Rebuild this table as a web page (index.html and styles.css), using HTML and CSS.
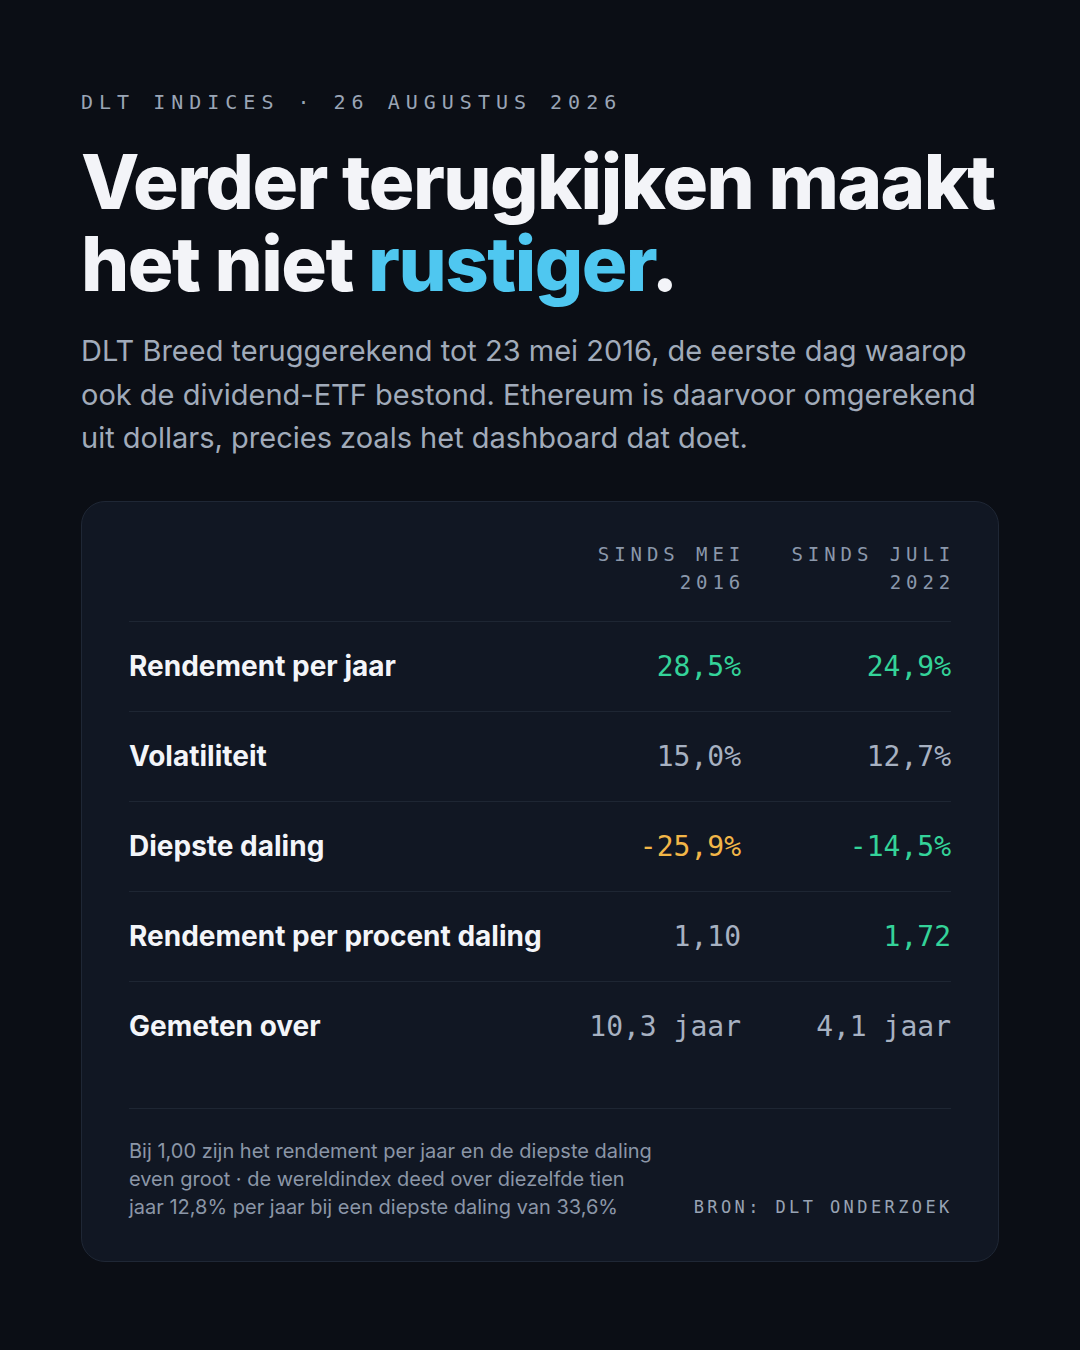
FILE: index.html
```html
<!DOCTYPE html>
<html lang="nl">
<head>
<meta charset="utf-8">
<title>DLT Indices</title>
<link rel="stylesheet" href="styles.css">
</head>
<body>
<main class="page">
  <div class="eyebrow">DLT INDICES · 26 AUGUSTUS 2026</div>
  <h1 class="title">Verder terugkijken maakt<br>het niet <span class="accent">rustiger</span>.</h1>
  <p class="lead">DLT Breed teruggerekend tot 23 mei 2016, de eerste dag waarop ook de dividend-ETF bestond. Ethereum is daarvoor omgerekend uit dollars, precies zoals het dashboard dat doet.</p>

  <section class="card">
    <div class="row head">
      <div></div>
      <div class="colhead">SINDS MEI<br>2016</div>
      <div class="colhead">SINDS JULI<br>2022</div>
    </div>
    <div class="row">
      <div class="label">Rendement per jaar</div>
      <div class="val green">28,5%</div>
      <div class="val green">24,9%</div>
    </div>
    <div class="row">
      <div class="label">Volatiliteit</div>
      <div class="val">15,0%</div>
      <div class="val">12,7%</div>
    </div>
    <div class="row">
      <div class="label">Diepste daling</div>
      <div class="val amber">-25,9%</div>
      <div class="val green">-14,5%</div>
    </div>
    <div class="row">
      <div class="label">Rendement per procent daling</div>
      <div class="val">1,10</div>
      <div class="val green">1,72</div>
    </div>
    <div class="row">
      <div class="label">Gemeten over</div>
      <div class="val">10,3 jaar</div>
      <div class="val">4,1 jaar</div>
    </div>
    <footer class="foot">
      <p class="note">Bij 1,00 zijn het rendement per jaar en de diepste daling even groot · de wereldindex deed over diezelfde tien jaar 12,8% per jaar bij een diepste daling van 33,6%</p>
      <div class="source">BRON: DLT ONDERZOEK</div>
    </footer>
  </section>
</main>
</body>
</html>
```

FILE: styles.css
```css
* { box-sizing: border-box; }
html, body { margin: 0; padding: 0; }
body {
  background: #0b0e15;
  width: 1080px;
  height: 1350px;
  overflow: hidden;
  font-family: Inter, "Noto Sans", sans-serif;
}
.page {
  padding: 89px 81px 0 81px;
}
.eyebrow {
  font-family: "DejaVu Sans Mono", monospace;
  font-size: 20px;
  line-height: 26px;
  letter-spacing: 0.3em;
  color: #9aa5b5;
}
.title {
  margin: 25px 0 0 0;
  font-family: Inter, sans-serif;
  font-weight: 800;
  font-size: 76px;
  line-height: 82px;
  letter-spacing: -0.02em;
  color: #f3f4f8;
}
.accent { color: #4fc7f0; }
.lead {
  margin: 25px 0 0 0;
  font-size: 29px;
  line-height: 43.5px;
  color: #a1abba;
  max-width: 918px;
}
.card {
  margin-top: 41px;
  background: #111723;
  border: 1px solid #1f2735;
  border-radius: 24px;
  padding: 38px 47px 40px 47px;
}
.row {
  display: grid;
  grid-template-columns: 1fr 190px 210px;
  align-items: center;
  height: 90px;
  border-top: 1px solid #1e2633;
}
.row.head {
  height: auto;
  border-top: none;
  padding-bottom: 25px;
  align-items: start;
}
.colhead {
  text-align: right;
  font-family: "DejaVu Sans Mono", monospace;
  font-size: 19px;
  line-height: 28px;
  letter-spacing: 0.26em;
  margin-right: -0.22em;
  color: #8b98ab;
}
.label {
  font-weight: 700;
  font-size: 28px;
  color: #f3f5f9;
}
.val {
  text-align: right;
  font-family: "DejaVu Sans Mono", monospace;
  font-size: 28px;
  color: #a7b1c1;
}
.val.green { color: #34d399; }
.val.amber { color: #f2b648; }
.foot {
  margin-top: 37px;
  border-top: 1px solid #1e2633;
  padding-top: 28px;
  display: flex;
  justify-content: space-between;
  align-items: flex-end;
}
.note {
  margin: 0;
  max-width: 535px;
  font-size: 20px;
  line-height: 28px;
  color: #8b96a7;
}
.source {
  font-family: "DejaVu Sans Mono", monospace;
  font-size: 17px;
  line-height: 28px;
  letter-spacing: 0.2em;
  margin-right: -0.1em;
  color: #98a3b4;
}
```
